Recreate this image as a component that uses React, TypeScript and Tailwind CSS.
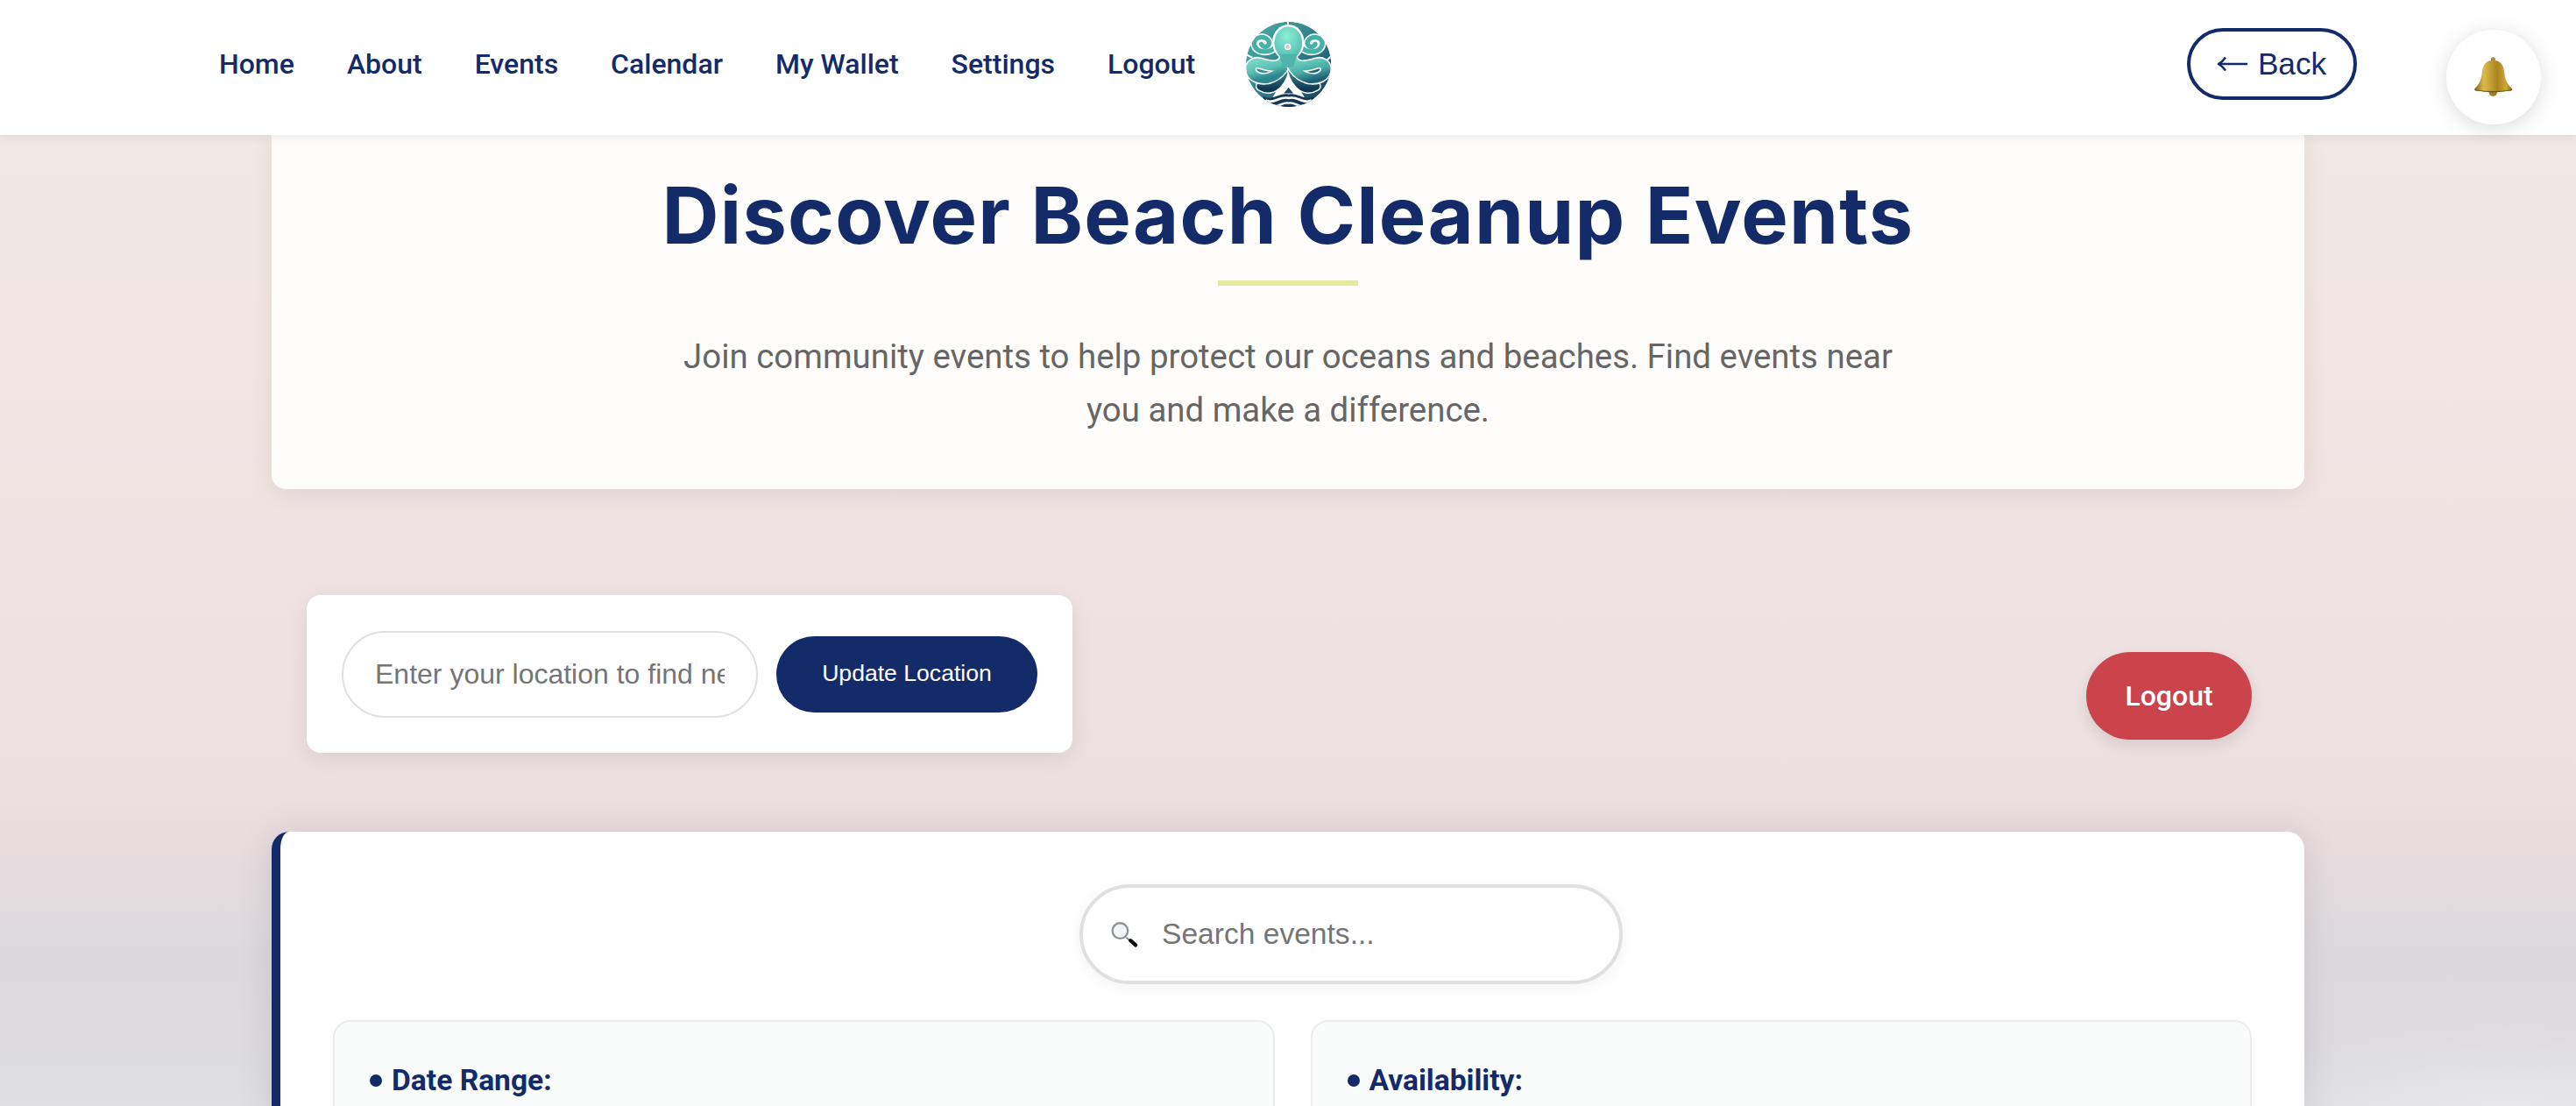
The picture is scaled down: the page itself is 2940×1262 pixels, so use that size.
const navLinks = ["Home", "About", "Events", "Calendar", "My Wallet", "Settings", "Logout"];

function OctopusLogo() {
  const arms = [
    "M170 150 C155 192 110 176 85 168 C50 160 42 202 75 216 C108 230 150 212 170 172",
    "M192 150 C207 192 252 176 277 168 C312 160 320 202 287 216 C254 230 212 212 192 172",
  ];
  const legs = [
    "M172 170 C166 225 132 272 88 246",
    "M190 170 C196 225 230 272 274 246",
  ];
  const curls = [
    "M138 112 C118 138 70 134 66 104 C64 78 106 72 116 96 C120 112 98 120 90 104",
    "M224 112 C244 138 292 134 296 104 C298 78 256 72 246 96 C242 112 264 120 272 104",
  ];
  return (
    <svg width="98" height="98" viewBox="38 26 290 290" className="shrink-0">
      <defs>
        <linearGradient id="logoBase" x1="0" y1="0" x2="1" y2="1">
          <stop offset="0" stopColor="#4fb3aa" />
          <stop offset="0.6" stopColor="#2a7283" />
          <stop offset="1" stopColor="#123350" />
        </linearGradient>
        <linearGradient id="logoArmLeft" x1="0" y1="0" x2="0.4" y2="1">
          <stop offset="0" stopColor="#7fe0cb" />
          <stop offset="0.6" stopColor="#5cc0b3" />
          <stop offset="1" stopColor="#2d8590" />
        </linearGradient>
        <linearGradient id="logoArmRight" x1="0.4" y1="0" x2="0.8" y2="1">
          <stop offset="0" stopColor="#6fd6c4" />
          <stop offset="0.6" stopColor="#47a8a4" />
          <stop offset="1" stopColor="#206178" />
        </linearGradient>
        <linearGradient id="logoLeg" x1="0" y1="0" x2="0" y2="1">
          <stop offset="0" stopColor="#4aaca6" />
          <stop offset="1" stopColor="#133a55" />
        </linearGradient>
        <radialGradient id="logoHead" cx="0.45" cy="0.3" r="0.8">
          <stop offset="0" stopColor="#8beed5" />
          <stop offset="1" stopColor="#4fb5ac" />
        </radialGradient>
        <clipPath id="logoClip">
          <circle cx="182" cy="172" r="144" />
        </clipPath>
      </defs>
      <g clipPath="url(#logoClip)">
        <circle cx="182" cy="172" r="144" fill="url(#logoBase)" />
        <path d="M180 26 L180 44" stroke="#fff" strokeWidth="5" />
        <path d="M40 140 L60 150 M300 170 L340 130" stroke="#fff" strokeWidth="6" />
        <path d="M304 160 L318 190 L300 192 Z" fill="#fff" />
        <path d="M182 190 L236 284 L128 284 Z" fill="#fff" />
        <path d="M182 250 L198 270 L166 270 Z" fill="#1c4b63" />
        <path d="M96 280 C128 298 150 266 182 274 C214 266 236 298 268 280 L268 345 L96 345 Z" fill="#163a55" />
        <path d="M104 294 C132 308 152 278 182 286 C212 278 232 308 260 294" fill="none" stroke="#fff" strokeWidth="8" />
        <path d="M124 313 C146 321 162 297 182 303 C202 297 218 321 240 313" fill="none" stroke="#fff" strokeWidth="7" />
        {legs.map((d) => (
          <g key={d}>
            <path d={d} fill="none" stroke="#fff" strokeWidth="36" strokeLinecap="round" />
            <path d={d} fill="none" stroke="url(#logoLeg)" strokeWidth="27" strokeLinecap="round" />
          </g>
        ))}
        {arms.map((d, i) => (
          <g key={d}>
            <path d={d} fill="none" stroke="#fff" strokeWidth="40" strokeLinecap="round" />
            <path
              d={d}
              fill="none"
              stroke={i === 0 ? "url(#logoArmLeft)" : "url(#logoArmRight)"}
              strokeWidth="31"
              strokeLinecap="round"
            />
          </g>
        ))}
        {curls.map((d) => (
          <g key={d}>
            <path d={d} fill="none" stroke="#fff" strokeWidth="25" strokeLinecap="round" />
            <path d={d} fill="none" stroke="#49b0a7" strokeWidth="16" strokeLinecap="round" />
          </g>
        ))}
        <ellipse cx="181" cy="98" rx="54" ry="60" fill="#fff" />
        <ellipse cx="181" cy="100" rx="47" ry="55" fill="url(#logoHead)" />
        <path d="M150 138 L212 138 L198 182 L164 182 Z" fill="#4fb5ac" />
        <circle cx="179" cy="113" r="11" fill="#fff" />
        <circle cx="179" cy="113" r="7" fill="#c9cfd0" />
      </g>
    </svg>
  );
}

function BellIcon() {
  return (
    <svg width="46" height="48" viewBox="36 68 146 150">
      <defs>
        <linearGradient id="bellBody" x1="0" y1="0" x2="1" y2="0">
          <stop offset="0" stopColor="#7f621b" />
          <stop offset="0.25" stopColor="#dcbc4c" />
          <stop offset="0.6" stopColor="#ab8420" />
          <stop offset="0.85" stopColor="#cfaa38" />
          <stop offset="1" stopColor="#7a5c17" />
        </linearGradient>
      </defs>
      <ellipse cx="107" cy="198" rx="15" ry="14" fill="#a37c2b" />
      <circle cx="107" cy="79" r="8" fill="#a8872e" />
      <path
        d="M107 82 C85 82 72 95 68 120 C65 150 60 165 40 185 Q37 192 50 194 L165 194 Q180 192 176 185 C155 165 150 150 147 120 C143 95 130 82 107 82 Z"
        fill="url(#bellBody)"
      />
      <path d="M42 188 Q107 200 174 188 L176 190 Q107 206 40 190 Z" fill="#6f5515" />
    </svg>
  );
}

function SearchIcon() {
  return (
    <svg width="34" height="34" viewBox="48 26 104 104" className="shrink-0">
      <line x1="108" y1="90" x2="124" y2="104" stroke="#6d7176" strokeWidth="5" />
      <line x1="122" y1="100" x2="140" y2="116" stroke="#111" strokeWidth="13" strokeLinecap="round" />
      <circle cx="86" cy="66" r="27" fill="#f3f4f6" stroke="#8e9298" strokeWidth="7" />
    </svg>
  );
}

function BackArrow() {
  return (
    <svg width="34" height="18" viewBox="0 0 34 18" className="shrink-0">
      <path d="M1 9 L34 9 M9 1.5 Q6 6 1 9 Q6 12 9 16.5" fill="none" stroke="#142b6a" strokeWidth="2.4" />
    </svg>
  );
}

function FilterCard({ title }: { title: string }) {
  return (
    <div className="h-[300px] rounded-[20px] border-2 border-[#ececec] bg-[#fafbfb] px-10 pt-[48px]">
      <div className="flex items-center gap-[11px] font-['Roboto',sans-serif] text-[33.6px] leading-[38px] font-bold text-[#142b6a]">
        <span className="size-[14px] rounded-full bg-[#142b6a]" />
        {title}
      </div>
    </div>
  );
}

export default function App() {
  return (
    <div className="h-[1262px] overflow-hidden bg-[radial-gradient(ellipse_300px_120px_at_2860px_1280px,#e8e7e9,transparent),linear-gradient(180deg,#f0e8e4_12%,#f0e4e3_40%,#ecdfe0_72%,#e6dbde_78%,#dcd9dd_86%,#dcdbdf_96%,#e0dfe2_100%)]">
      <nav className="relative z-10 flex h-[154px] bg-white pr-[40px] pb-[8px] pl-[250px] shadow-[0_2px_12px_rgba(0,0,0,0.08)]">
        <div className="flex items-center gap-[60px] font-['Roboto',sans-serif] text-[32px] font-medium text-[#142b6a]">
          {navLinks.map((link) => (
            <a key={link} href="#">
              {link}
            </a>
          ))}
        </div>
        <div className="ml-[58px] flex items-center">
          <OctopusLogo />
        </div>
        <div className="ml-auto flex items-center">
          <button className="flex h-[82px] w-[194px] items-center justify-center gap-[12px] rounded-full border-4 border-[#142b6a] bg-white font-['Liberation_Sans',sans-serif] text-[35.2px] text-[#142b6a]">
            <BackArrow />
            Back
          </button>
        </div>
        <div className="mt-[34px] ml-[102px] flex size-[108px] items-center justify-center rounded-full bg-white shadow-[0_4px_24px_rgba(0,0,0,0.14)]">
          <BellIcon />
        </div>
      </nav>

      <main className="px-[310px]">
        <section className="flex h-[404px] flex-col items-center rounded-b-[16px] bg-[#fefdfc] pt-[42px] shadow-[0_6px_28px_rgba(0,0,0,0.07)]">
          <h1 className="font-['Inter',sans-serif] text-[90px] leading-[100px] font-bold tracking-[1.2px] text-[#142b6a]">
            Discover Beach Cleanup Events
          </h1>
          <div className="mt-[24px] h-[6px] w-[160px] bg-[#e6e8a0]" />
          <p className="mt-[50px] w-[1400px] text-center font-['Roboto',sans-serif] text-[38.4px] leading-[61px] text-[#666]">
            Join community events to help protect our oceans and beaches. Find events near you and make a difference.
          </p>
        </section>

        <div className="mt-[121px] flex items-start justify-between pr-[60px] pl-[40px]">
          <div className="flex h-[180px] w-[874px] items-center gap-[21px] rounded-[16px] bg-white px-[40px] shadow-[0_6px_24px_rgba(0,0,0,0.08)]">
            <input
              placeholder="Enter your location to find nearby events"
              className="h-[99px] w-[475px] rounded-full border-2 border-[#e0e0e0] bg-white px-[36px] font-['Liberation_Sans',sans-serif] text-[32px] text-[#333] outline-none placeholder:text-[#757575]"
            />
            <button className="h-[87px] w-[299px] rounded-full bg-[#142b6a] font-['Liberation_Sans',sans-serif] text-[26.6px] text-white">
              Update Location
            </button>
          </div>
          <button className="mt-[65px] h-[100px] w-[189px] rounded-full bg-[#cc444b] font-['Roboto',sans-serif] text-[32px] font-medium text-white shadow-[0_6px_16px_rgba(0,0,0,0.1)]">
            Logout
          </button>
        </div>

        <section className="mt-[90px] h-[600px] rounded-[20px] border-l-[10px] border-[#142b6a] bg-white pt-[60px] pr-[60px] pl-[60px] shadow-[0_0_40px_rgba(0,0,0,0.1)]">
          <div className="ml-[852px] flex h-[114px] w-[620px] items-center gap-[26px] rounded-full border-4 border-[#e0e0e0] bg-white pl-[30px] shadow-[0_4px_16px_rgba(0,0,0,0.05)]">
            <SearchIcon />
            <input
              placeholder="Search events..."
              className="w-[420px] bg-transparent font-['Liberation_Sans',sans-serif] text-[33.6px] text-[#333] outline-none placeholder:text-[#757575]"
            />
          </div>
          <div className="mt-[41px] grid grid-cols-2 gap-[41px]">
            <FilterCard title="Date Range:" />
            <FilterCard title="Availability:" />
          </div>
        </section>
      </main>
    </div>
  );
}
